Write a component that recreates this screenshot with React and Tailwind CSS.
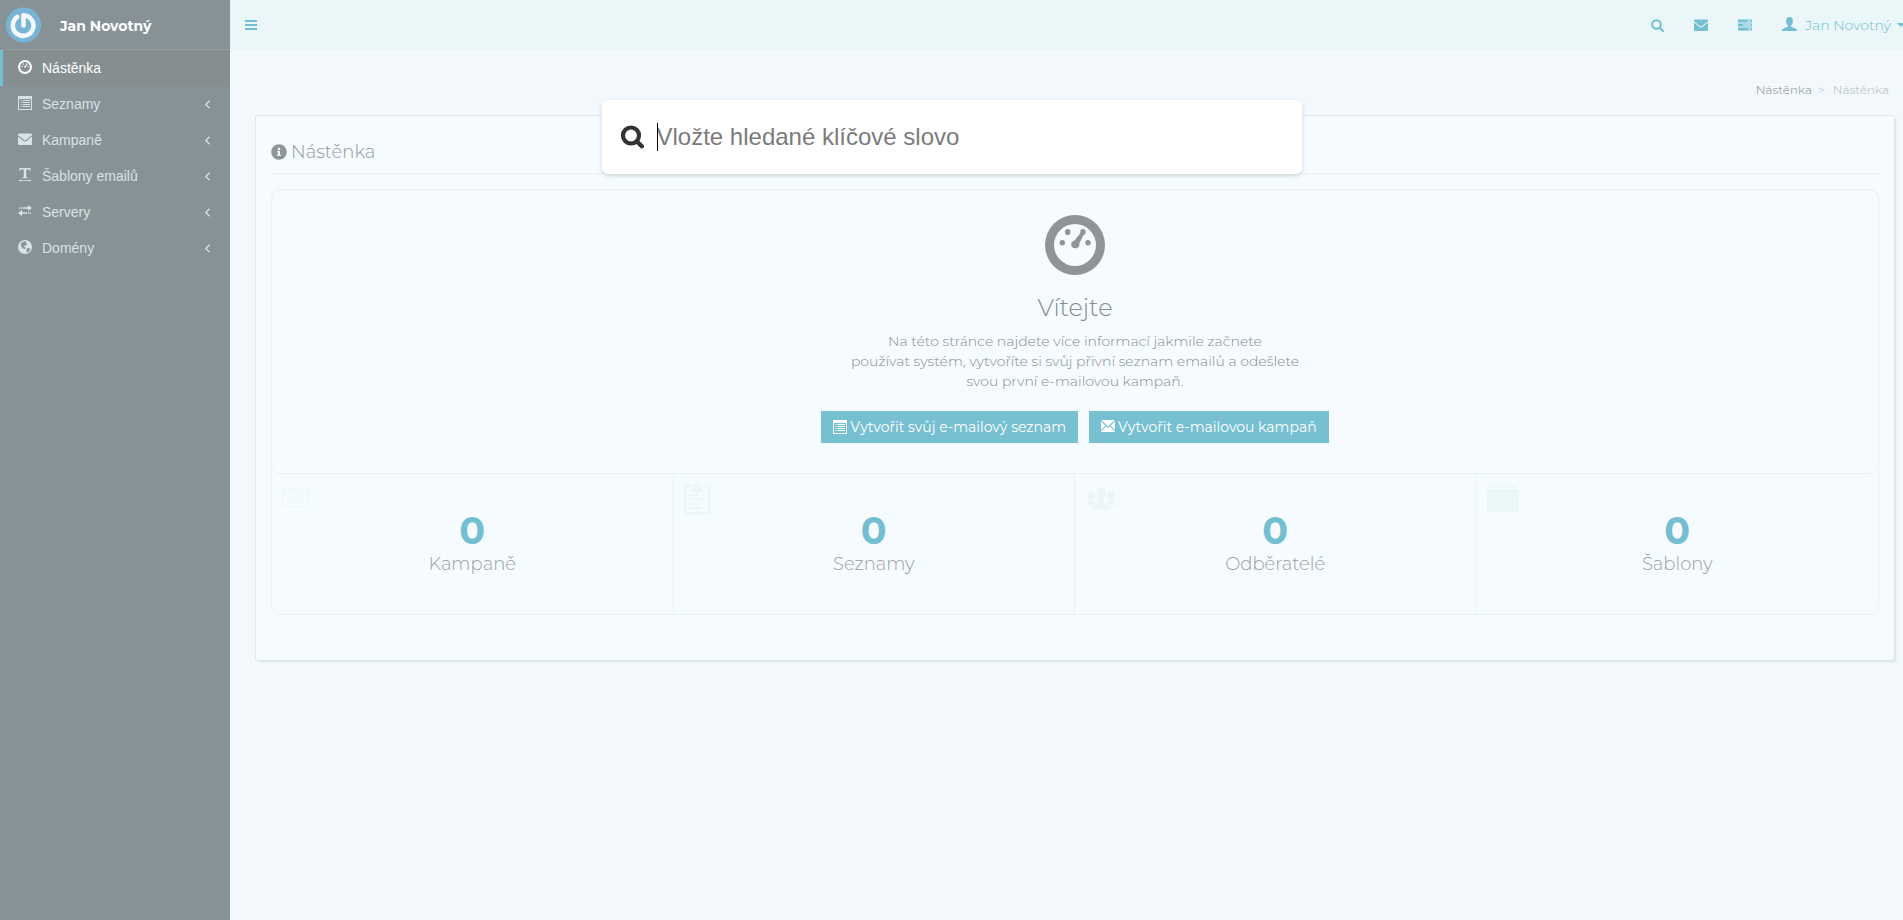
import { FaInfoCircle } from "react-icons/fa";

function Gauge({ className }) {
  return (
    <svg viewBox="0 0 60 60" className={className} fill="currentColor" aria-hidden="true">
      <path fillRule="evenodd" d="M30 0a30 30 0 1 1 0 60a30 30 0 0 1 0-60zM30 9a21 21 0 1 0 0 42a21 21 0 0 0 0-42z" />
      <ellipse cx="22.7" cy="17" rx="2.7" ry="3.1" />
      <ellipse cx="38" cy="17" rx="2.7" ry="3.1" />
      <circle cx="17.3" cy="27.7" r="2.7" />
      <circle cx="43" cy="27.7" r="2.7" />
      <ellipse cx="30.3" cy="29.5" rx="4.1" ry="3.7" />
      <path d="M27.8 27.5L35.8 17.500L39 19L33.3 30.500z" />
    </svg>
  );
}

function ListIcon({ className }) {
  return (
    <svg viewBox="0 0 14 14" className={className} aria-hidden="true">
      <path fill="currentColor" fillRule="evenodd" d="M0 0h14v14H0zM1 3v10h12V3z" />
      <path fill="none" stroke="currentColor" d="M2.500 4.500h1M4.500 4.500h7.500M2.500 6.500h1M4.500 6.500h7.500M2.500 8.500h1M4.500 8.500h7.500M2.500 10.500h1M4.500 10.500h7.500" />
    </svg>
  );
}

function Envelope({ className }) {
  return (
    <svg viewBox="0 0 14 12" className={className} fill="currentColor" aria-hidden="true">
      <path d="M1 .5h12a1 1 0 0 1 1 1v.7L7.600 7.300a1 1 0 0 1-1.200 0L0 2.200v-.7a1 1 0 0 1 1-1z" />
      <path d="M0 3.400l5.600 4.600a2.200 2.200 0 0 0 2.800 0L14 3.400v7.600a1 1 0 0 1-1 1H1a1 1 0 0 1-1-1z" />
    </svg>
  );
}

function GlyphEnvelope({ className }) {
  return (
    <svg viewBox="0 0 14 12" className={className} fill="currentColor" aria-hidden="true">
      <path d="M.3 0h13.400L7 6.600zM0 1.200l4.400 4.400L0 10.200zM14 1.200v9L9.600 5.600zM5.200 6.300L7 8l1.800-1.700L14 11.700V12H0v-.3z" />
    </svg>
  );
}

function TextWidth({ className }) {
  return (
    <svg viewBox="0 0 14 15" className={className} fill="currentColor" aria-hidden="true">
      <path d="M1 0h12v3.200h-.7C12.100 2 11.500 1.500 10.400 1.500H8.300V9.200c0 .7.300.8 1.500.9v.9H4.200v-.9c1.200-.1 1.500-.2 1.500-.9V1.500H3.600C2.500 1.500 1.900 2 1.700 3.200H1z" />
      <path d="M0 13.500l2.500-1.500v1h9v-1l2.500 1.500-2.500 1.500v-1h-9v1z" />
    </svg>
  );
}

function Transfer({ className }) {
  return (
    <svg viewBox="0 0 14 14" className={className} fill="currentColor" aria-hidden="true">
      <path d="M1 3.200h1.200v1.600H1zM3 3.200h1.200v1.600H3zM5 3.200h5V1L14 4 10 7V4.800H5zM13 8.200h-1.200v1.600H13zM11 8.200H9.800v1.600H11zM9 8.200H4V6L0 9l4 3V9.800h5z" />
    </svg>
  );
}

function Globe({ className }) {
  return (
    <svg viewBox="0 0 14 14" className={className} aria-hidden="true">
      <circle cx="7" cy="7" r="7" fill="currentColor" />
      <path fill="#879296" d="M4 2.200L6.500 1.300l1.800.8-.6 1.300 1.200.2-.4 1.600-2 .6-1.100 1.200 1.800.3.700 1-1 .8-1.600-.6L3.500 7 2.800 4.500zM8.500 8.700l2.700-.6 1.200.8-1 2.200-1.900 1.400-1.200-1.700z" />
    </svg>
  );
}

function Server({ className }) {
  return (
    <svg viewBox="0 0 14 12" className={className} aria-hidden="true">
      <path fill="currentColor" d="M0 .5h14v3H0zM0 4.500h14v3H0zM0 8.500h14v3H0z" />
      <path stroke="#eaf6f8" d="M9 2h4M5 6h8M10 10h3" />
    </svg>
  );
}

function Person({ className }) {
  return (
    <svg viewBox="0 0 15 14" className={className} fill="currentColor" aria-hidden="true">
      <path d="M7.500 0c2.200 0 3.400 1.600 3.400 3.900 0 1.900-.8 3.600-1.900 4.500v1.100c.5.900 5.500 1.700 5.800 3.100V14H.2v-1.400C.5 11.200 5.500 10.400 6 9.500V8.400C4.900 7.500 4.100 5.800 4.100 3.900 4.100 1.600 5.300 0 7.500 0z" />
    </svg>
  );
}

function MailOutline() {
  return (
    <svg viewBox="0 0 27 18" className="mt-5 ml-px h-[18px] w-[27px]" fill="none" stroke="currentColor" aria-hidden="true">
      <path d="M.5.5h26v17H.5zM.5 1l11 9.200q2 1.600 4 0L26.500 1M5.500 12.500l5-3.500M21.500 12.500l-5-3.500" />
    </svg>
  );
}

function Clipboard() {
  return (
    <svg viewBox="0 0 26 31" className="mt-[14px] ml-px h-[31px] w-[26px]" fill="none" stroke="currentColor" strokeWidth="2" aria-hidden="true">
      <path d="M8 3H1v27h24V3h-7" />
      <path fill="currentColor" stroke="none" fillRule="evenodd" d="M6 9q1-3 4-4q0-5 3-5t3 5q3 1 4 4zM13 2a1.300 1.300 0 1 0 0 2.600a1.300 1.300 0 0 0 0-2.600z" />
      <path d="M5 12h8M5 16h15M5 21h9M5 25h12" />
    </svg>
  );
}

function People() {
  return (
    <svg viewBox="0 0 32 21" className="mt-[19px] ml-px h-[21px] w-8" fill="currentColor" aria-hidden="true">
      <path d="M16 0c3.200 0 4.700 2 4.700 5 0 2.700-1 5-2.400 6.500v2.800c.8 2 6.800 1.900 7.700 6.700H6c.9-4.800 6.900-4.700 7.700-6.700v-2.800C12.300 10 11.300 7.700 11.300 5 11.300 2 12.800 0 16 0z" />
      <path d="M6 3.500c2.600 0 3.900 1.400 3.900 4 0 2-.7 3.500-1.700 4.700v1.300c.3.800 2 1 3 1.500-1.300.8-2.500 1.200-3.700 2.200H0c.3-2.800 4-2.500 4.400-3.900v-1.100C3.300 11 2.400 9.500 2.400 7.500c0-2.600 1.200-4 3.600-4zM26 3.500c-2.600 0-3.900 1.400-3.900 4 0 2 .7 3.500 1.700 4.700v1.300c-.3.800-2 1-3 1.500 1.300.8 2.500 1.200 3.700 2.200H32c-.3-2.800-4-2.500-4.400-3.900v-1.100c1.100-1.200 2-2.700 2-4.700 0-2.600-1.200-4-3.600-4z" />
    </svg>
  );
}

function Albums() {
  return (
    <svg viewBox="0 0 32 27" className="mt-4 ml-px h-[27px] w-8" fill="currentColor" aria-hidden="true">
      <path d="M0 4h32v23H0zM2.500 2h27v1h-27zM5 0h22v1H5z" />
    </svg>
  );
}

const nav = [
  { label: "Nástěnka", icon: Gauge, active: true },
  { label: "Seznamy", icon: ListIcon },
  { label: "Kampaně", icon: Envelope },
  { label: "Šablony emailů", icon: TextWidth },
  { label: "Servery", icon: Transfer },
  { label: "Domény", icon: Globe },
];

const stats = [
  { label: "Kampaně", icon: MailOutline },
  { label: "Seznamy", icon: Clipboard },
  { label: "Odběratelé", icon: People },
  { label: "Šablony", icon: Albums },
];

function Sidebar() {
  return (
    <aside className="w-[230px] shrink-0 bg-[#879296]">
      <div className="flex h-[50px] items-center gap-[18px] border-b border-[#949d9f] pl-1.5 font-[Montserrat,Inter,sans-serif] text-sm font-bold text-white">
        <svg viewBox="0 0 36 36" className="size-9" aria-hidden="true">
          <circle cx="17.500" cy="18" r="17.500" fill="#78b4d8" />
          <path d="M17.500 18.500V8.200A10.300 10.300 0 1 1 11.300 10" fill="none" stroke="#f3f8fa" strokeWidth="4.600" strokeLinecap="round" strokeLinejoin="round" />
        </svg>
        <span className="pt-0.5">Jan Novotný</span>
      </div>
      <nav>
        {nav.map(({ label, icon: Icon, active }) => (
          <a
            key={label}
            href="#"
            className={
              active
                ? "flex h-9 items-center gap-2.5 border-l-3 border-[#73bfd1] bg-[#858f8f] pr-5 pl-[15px] text-white"
                : "flex h-9 items-center gap-2.5 border-l-3 border-transparent pr-5 pl-[15px] text-[#d6e3e7]"
            }
          >
            <Icon className="mb-0.5 size-3.5" />
            <span className="grow">{label}</span>
            {!active && (
              <svg viewBox="0 0 5 9" className="h-[9px] w-[5px]" fill="none" stroke="currentColor" strokeWidth="1.300" aria-hidden="true">
                <path d="M4.500.8L.9 4.500l3.600 3.700" />
              </svg>
            )}
          </a>
        ))}
      </nav>
    </aside>
  );
}

function Header() {
  return (
    <header className="flex h-[50px] items-center overflow-hidden bg-[#eaf6f8] pl-[15px] text-[#73bfd1]">
      <button aria-label="Menu">
        <svg viewBox="0 0 12 10" className="h-2.5 w-3" stroke="currentColor" strokeWidth="2" aria-hidden="true">
          <path d="M0 1h12M0 5h12M0 9h12" />
        </svg>
      </button>
      <div className="-mr-0.5 ml-auto flex items-center gap-[30px]">
        <button aria-label="Hledat">
          <svg viewBox="0 0 13 13" className="size-[13px]" fill="none" stroke="currentColor" strokeWidth="2" strokeLinecap="round" aria-hidden="true">
            <circle cx="5.500" cy="5.500" r="4.300" />
            <path d="M8.700 8.700L12 12" />
          </svg>
        </button>
        <button aria-label="Zprávy"><Envelope className="h-3 w-3.5" /></button>
        <button aria-label="Servery"><Server className="h-3 w-3.5" /></button>
        <button className="flex items-center font-[Montserrat,Inter,sans-serif] text-sm font-light whitespace-nowrap">
          <Person className="mr-2 mb-0.5 h-3.5 w-[15px]" />
          Jan Novotný
          <svg viewBox="0 0 8 4" className="ml-1.5 h-1 w-2" fill="currentColor" aria-hidden="true"><path d="M0 0h8L4 4z" /></svg>
        </button>
      </div>
    </header>
  );
}

function Dashboard() {
  return (
    <main className="pt-[30px] pr-[9px] pl-[25px] font-[Montserrat,Inter,sans-serif] font-light">
      <nav className="flex h-[35px] justify-end gap-1.5 pt-0.5 pr-[5px] text-xs leading-4" aria-label="Drobečková navigace">
        <a href="#" className="text-[#858c8f]">Nástěnka</a>
        <span className="text-[#c0c8ca]">&gt;</span>
        <span className="ml-0.5 text-[#b0b7ba]">Nástěnka</span>
      </nav>
      <section className="rounded-[3px] border border-r-0 border-b-0 border-[#dfe6e9] bg-[#f5fbfe] px-[15px] pb-[45px] shadow-[2px_2px_2px_#dde4e7]">
        <h1 className="flex h-[58px] items-center gap-1 border-b border-[#eaf1f3] pt-[14px] text-lg text-[#8f9698]">
          <FaInfoCircle className="size-4" />
          Nástěnka
        </h1>
        <div className="mt-[15px] rounded-[10px] border border-[#ebf2f4]">
          <div className="-mx-px -mt-px flex flex-col items-center rounded-[10px] border border-[#ebf2f4] pt-[25px] pb-[30px] text-center text-[#858c8f]">
            <Gauge className="size-[60px] text-[#8f9496]" />
            <h2 className="mt-5 text-2xl leading-[26px]">Vítejte</h2>
            <p className="mt-2.5 text-sm leading-5">
              Na této stránce najdete více informací jakmile začnete<br />
              používat systém, vytvoříte si svůj přivní seznam emailů a odešlete<br />
              svou první e-mailovou kampaň.
            </p>
            <div className="mt-5 flex gap-[11px] text-sm font-normal text-white">
              <button className="flex h-8 items-center gap-[3px] bg-[#76c0d2] px-3"><ListIcon className="size-3.5" />Vytvořit svůj e-mailový seznam</button>
              <button className="flex h-8 items-center gap-[3px] bg-[#76c0d2] px-3"><GlyphEnvelope className="mb-0.5 h-3 w-3.5" />Vytvořit e-mailovou kampaň</button>
            </div>
          </div>
          <div className="grid grid-cols-4 divide-x divide-[#ebf2f4]">
            {stats.map(({ label, icon: Icon }) => (
              <div key={label} className="relative h-[140px] pt-9 text-center">
                <div className="absolute top-[-5px] left-[9px] text-[#eaf6f8]"><Icon /></div>
                <div className="text-[38px] leading-[42px] font-bold text-[#73bfd1]">0</div>
                <div className="text-lg leading-6 text-[#989ea1]">{label}</div>
              </div>
            ))}
          </div>
        </div>
      </section>
    </main>
  );
}

function SearchBox() {
  return (
    <form role="search" className="absolute inset-x-0 top-[100px] mx-auto flex h-[74px] max-w-[700px] items-center rounded-md bg-white pr-4 pl-[18px] shadow-[0_2px_4px_#ccd6d8]">
      <label htmlFor="keyword" className="text-[#333]" aria-label="Hledat">
        <svg viewBox="0 0 24 24" className="size-6" fill="none" stroke="currentColor" strokeLinecap="round" aria-hidden="true">
          <circle cx="11" cy="10.500" r="8" strokeWidth="4.200" />
          <path d="M17.500 17l4.300 4.300" strokeWidth="4.400" />
        </svg>
      </label>
      <div className="relative ml-[13px] flex grow items-center">
        <input id="keyword" type="search" placeholder="Vložte hledané klíčové slovo" className="w-full bg-transparent text-2xl text-[#333] caret-transparent outline-none placeholder:text-[#7b7b7b]" />
        <span className="absolute left-0 h-7 w-px bg-black" />
      </div>
    </form>
  );
}

export default function App() {
  return (
    <div className="relative flex min-h-screen bg-[#f2f8fb] font-['Liberation_Sans',Arial,sans-serif] text-sm">
      <Sidebar />
      <div className="min-w-0 grow">
        <Header />
        <Dashboard />
      </div>
      <SearchBox />
    </div>
  );
}
